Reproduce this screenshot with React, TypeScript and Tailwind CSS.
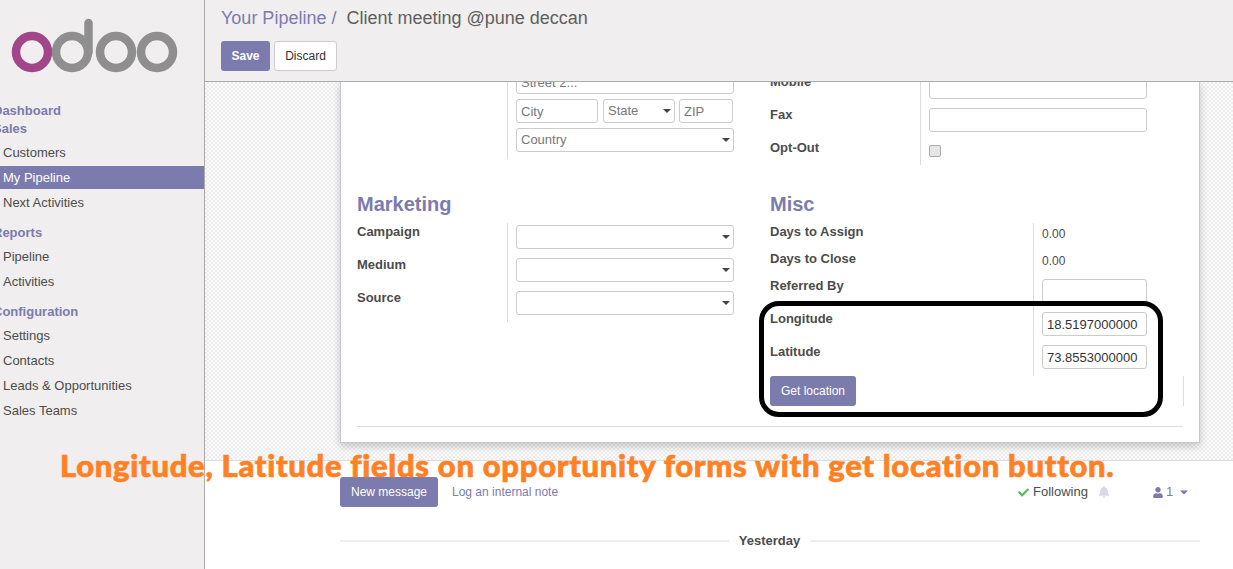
import type { ReactNode } from "react";
import { FaBell, FaCaretDown, FaCheck, FaUser } from "react-icons/fa";

const NAV = [
  { title: "Dashboard", items: [] as string[], top: "mt-[102px]" },
  { title: "Sales", items: ["Customers", "My Pipeline", "Next Activities"], top: "" },
  { title: "Reports", items: ["Pipeline", "Activities"], top: "mt-[10px]" },
  {
    title: "Configuration",
    items: ["Settings", "Contacts", "Leads & Opportunities", "Sales Teams"],
    top: "mt-[10px]",
  },
];

const inputClass =
  "block h-6 w-full rounded-[3px] border border-[#ccc] bg-white px-1 text-[13px] text-[#333] outline-none placeholder:text-[#777]";

function Caret() {
  return (
    <span className="pointer-events-none absolute right-[4px] top-[10px] h-0 w-0 border-x-[4px] border-t-[4px] border-x-transparent border-t-[#444]" />
  );
}

function SelectBox({ label, className = "" }: { label?: string; className?: string }) {
  return (
    <div className={`relative ${className}`}>
      <select className={`${inputClass} appearance-none text-[#777]`} defaultValue="">
        <option value="">{label ?? ""}</option>
      </select>
      <Caret />
    </div>
  );
}

function Row({
  label,
  children,
  height = "h-[33px]",
  labelWidth = "w-[150px]",
  valueWidth = "w-[227px]",
}: {
  label?: string;
  children: ReactNode;
  height?: string;
  labelWidth?: string;
  valueWidth?: string;
}) {
  return (
    <div className={`flex ${height}`}>
      <div className={`${labelWidth} pt-px text-[13px] font-bold leading-4 text-[#4c4c4c]`}>{label}</div>
      <div className={`${valueWidth} border-l border-[#ddd] pl-2 pt-[2px]`}>{children}</div>
    </div>
  );
}

function MiscRow({ label, children, height }: { label: string; children: ReactNode; height?: string }) {
  return (
    <Row label={label} height={height} labelWidth="w-[263px]" valueWidth="w-[114px]">
      {children}
    </Row>
  );
}

function Logo() {
  return (
    <svg width="204" height="80" viewBox="0 0 204 80" className="absolute left-0 top-0">
      <circle cx="32" cy="52" r="16" fill="none" stroke="#a24689" strokeWidth="8.5" />
      <circle cx="72" cy="52" r="16" fill="none" stroke="#8f8f8f" strokeWidth="8.5" />
      <path d="M88.5 23 V52" fill="none" stroke="#8f8f8f" strokeWidth="8.5" strokeLinecap="round" />
      <circle cx="116" cy="52" r="16" fill="none" stroke="#8f8f8f" strokeWidth="8.5" />
      <circle cx="157" cy="52" r="16" fill="none" stroke="#8f8f8f" strokeWidth="8.5" />
    </svg>
  );
}

function Sidebar() {
  return (
    <aside className="relative h-full w-[205px] shrink-0 overflow-hidden border-r border-[#aaa] bg-[#f0eeee]">
      <Logo />
      {NAV.map((group) => (
        <div key={group.title} className={group.top}>
          <div
            className={`ml-[-7px] text-[13px] font-bold leading-[18px] text-[#7c7bad] ${group.items.length ? "mb-[3px]" : ""}`}
          >
            {group.title}
          </div>
          {group.items.map((item) =>
            item === "My Pipeline" ? (
              <div key={item} className="mb-[2px] flex h-[23px] items-center bg-[#7c7bad] pl-[3px] text-[13px] text-white">
                {item}
              </div>
            ) : (
              <div key={item} className="mb-[2px] flex h-[23px] items-center pl-[3px] text-[13px] text-[#4c4c4c]">
                {item}
              </div>
            ),
          )}
        </div>
      ))}
    </aside>
  );
}

function Header() {
  return (
    <header className="h-[82px] shrink-0 border-b border-[#aaa] bg-[#f0eeee] pl-4">
      <div className="h-[41px] pt-[7px] text-[18px] leading-[22px]">
        <span className="text-[#7c7bad]">Your Pipeline</span>
        <span className="text-[#7c7bad]"> / </span>
        <span className="ml-[5px] text-[#5f5f5f]">Client meeting @pune deccan</span>
      </div>
      <div className="flex gap-1">
        <button className="h-[30px] w-[49px] rounded-[3px] bg-[#7c7bad] text-[12px] font-bold text-white">Save</button>
        <button className="h-[30px] w-[63px] rounded-[3px] border border-[#ccc] bg-white text-[12px] text-[#333]">
          Discard
        </button>
      </div>
    </header>
  );
}

function Sheet() {
  return (
    <div className="ml-[135px] h-[361px] w-[860px] overflow-hidden border-x border-b border-[#c8c8d0] bg-white px-4 shadow-[0_3px_8px_rgba(0,0,0,0.2)]">
      <div className="-mt-[12px] grid grid-cols-2">
        <div className="h-[95px] pr-9">
          <div className="flex h-[89px]">
            <div className="w-[150px]" />
            <div className="flex w-[227px] flex-col gap-[5px] border-l border-[#ddd] pl-2">
              <input readOnly placeholder="Street 2..." className={inputClass} />
              <div className="flex">
                <input readOnly placeholder="City" className={`${inputClass} !w-[82px]`} />
                <SelectBox label="State" className="ml-[5px] w-[72px]" />
                <input readOnly placeholder="ZIP" className={`${inputClass} ml-1 !w-[54px]`} />
              </div>
              <SelectBox label="Country" />
            </div>
          </div>
        </div>
        <div className="pr-9 pt-[3px]">
          <Row label="Mobile">
            <input readOnly className={inputClass} />
          </Row>
          <Row label="Fax">
            <input readOnly className={inputClass} />
          </Row>
          <Row label="Opt-Out" height="h-[26px]">
            <input
              type="checkbox"
              readOnly
              className="mt-[4px] block h-3 w-3 appearance-none rounded-[2px] border border-[#aaa] bg-[#e6e6e6]"
            />
          </Row>
        </div>

        <div className="pr-9">
          <h2 className="mb-[9px] mt-[29px] text-[20px] font-bold leading-5 text-[#7c7bad]">Marketing</h2>
          {["Campaign", "Medium", "Source"].map((label) => (
            <Row key={label} label={label}>
              <SelectBox />
            </Row>
          ))}
        </div>
        <div>
          <div className="pr-9">
            <h2 className="mb-[9px] mt-[29px] text-[20px] font-bold leading-5 text-[#7c7bad]">Misc</h2>
            <MiscRow label="Days to Assign" height="h-[27px]">
              <div className="pt-px text-[12px] leading-4 text-[#4c4c4c]">0.00</div>
            </MiscRow>
            <MiscRow label="Days to Close" height="h-[27px]">
              <div className="pt-px text-[12px] leading-4 text-[#4c4c4c]">0.00</div>
            </MiscRow>
            <MiscRow label="Referred By">
              <input readOnly className={inputClass} />
            </MiscRow>
            <MiscRow label="Longitude">
              <input readOnly defaultValue="18.5197000000" className={inputClass} />
            </MiscRow>
            <MiscRow label="Latitude">
              <input readOnly defaultValue="73.8553000000" className={inputClass} />
            </MiscRow>
          </div>
          <div className="-mr-px h-[30px] border-r border-[#ddd]">
            <button className="h-[30px] w-[86px] rounded-[3px] bg-[#7c7bad] text-[12px] text-white">Get location</button>
          </div>
        </div>
      </div>
      <div className="mt-5 border-t border-[#ddd]" />
    </div>
  );
}

function Chatter() {
  return (
    <section className="flex-1 bg-white pl-[135px] pr-[33px] pt-4">
      <div className="flex h-[30px] items-center">
        <button className="h-[30px] w-[98px] rounded-[3px] bg-[#7c7bad] text-[12px] text-white">New message</button>
        <span className="ml-[14px] text-[12px] text-[#7c7bad]">Log an internal note</span>
        <div className="ml-auto flex w-[182px] items-center text-[13px] text-[#4c4c4c]">
          <FaCheck className="h-[11px] w-[11px] text-[#5cb85c]" />
          <span className="ml-[4px] w-[55px]">Following</span>
          <FaBell className="ml-[10px] h-3 w-3 text-[#d8d8e6]" />
          <FaUser className="ml-[43px] h-[11px] w-[10px] text-[#7c7bad]" />
          <span className="ml-[3px] text-[#7c7bad]">1</span>
          <FaCaretDown className="ml-[6px] h-3 w-[10px] text-[#7c7bad]" />
        </div>
      </div>
      <div className="mt-6 flex items-center">
        <div className="h-0.5 w-[389px] bg-[#eee]" />
        <span className="w-[81px] text-center text-[13px] font-bold leading-[20px] text-[#4c4c4c]">Yesterday</span>
        <div className="h-0.5 flex-1 bg-[#eee]" />
      </div>
    </section>
  );
}

export default function App() {
  return (
    <div className="relative flex h-[569px] w-[1233px] overflow-hidden bg-white font-['Liberation_Sans',Arial,sans-serif]">
      <Sidebar />
      <main className="flex h-full flex-1 flex-col">
        <Header />
        <div className="h-[379px] shrink-0 overflow-hidden border-b border-[#ddd] bg-[repeating-conic-gradient(#ececec_0%_25%,#fbfbfb_0%_50%)] bg-[length:4px_4px]">
          <Sheet />
        </div>
        <Chatter />
      </main>

      {/* callout drawn over the form */}
      <div className="pointer-events-none absolute left-[759px] top-[301px] h-[116px] w-[404px] rounded-[20px] border-[5px] border-black" />
      <div className="pointer-events-none absolute left-[60px] top-[447px] whitespace-nowrap font-['Lato',sans-serif] text-[31px] font-black leading-[36px] tracking-[0.7px] text-[#ff8124] [-webkit-text-stroke:0.7px_#ff8124]">
        Longitude, Latitude fields on opportunity forms with get location button.
      </div>
    </div>
  );
}
